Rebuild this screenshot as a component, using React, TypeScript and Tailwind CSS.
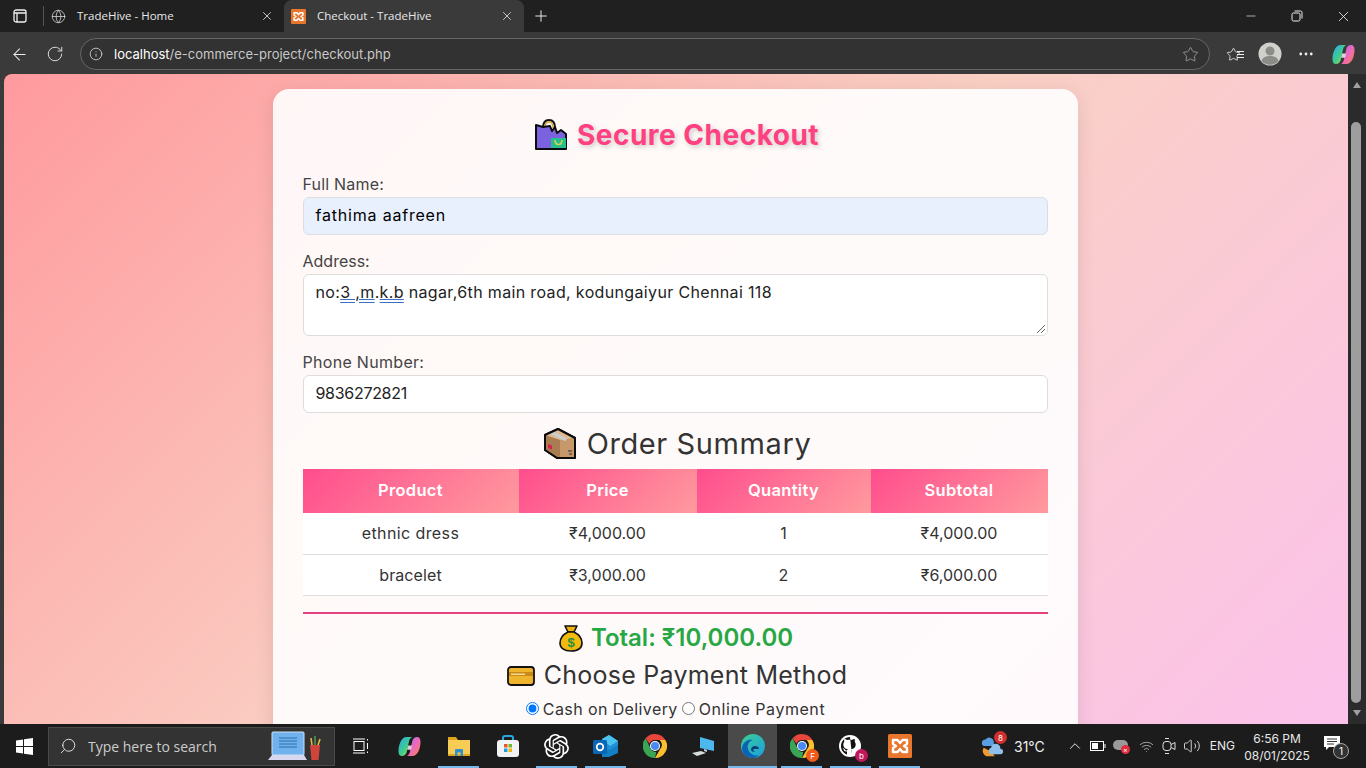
import React from 'react';
import { X, Plus, ArrowLeft, RotateCw, Info, Star, Minus, MoreHorizontal, Globe, ChevronUp, Volume2, Wifi, Search } from 'lucide-react';
import { SiOpenai } from 'react-icons/si';

const font = "font-['Inter','Open_Sans',sans-serif]";

// Small colored icons
const Xampp = ({ size = 18 }: { size?: number }) => (
  <svg width={size} height={size} viewBox="0 0 24 24">
    <rect width="24" height="24" rx="1.5" fill="#e8762d" />
    <path d="M5 6h4.5l2.5 3 2.5-3H19v4l-3 2 3 2v4h-4.5L12 15l-2.5 3H5v-4l3-2-3-2z" fill="none" stroke="#fff" strokeWidth="2.4" strokeLinejoin="round" />
  </svg>
);

const Copilot = ({ size = 24, id }: { size?: number; id: string }) => (
  <svg width={size} height={size} viewBox="0 0 24 24">
    <defs>
      <linearGradient id={`${id}A`} x1="0" y1="0" x2="1" y2="1">
        <stop offset="0" stopColor="#2aa8ee" />
        <stop offset="0.55" stopColor="#3fcf8a" />
        <stop offset="1" stopColor="#f7d43a" />
      </linearGradient>
      <linearGradient id={`${id}B`} x1="0" y1="0" x2="1" y2="1">
        <stop offset="0" stopColor="#a86bf0" />
        <stop offset="0.55" stopColor="#f06ab8" />
        <stop offset="1" stopColor="#f7803a" />
      </linearGradient>
    </defs>
    <path d="M9 2h6c-2 .6-3 2.400-3.600 5L9 18c-.6 2.500-2.400 4-5 4-2 0-3.500-1.500-3.500-5C.5 10 3.500 2 9 2z" fill={`url(#${id}A)`} />
    <path d="M15 22H9c2-.6 3-2.400 3.600-5L15 6c.6-2.500 2.400-4 5-4 2 0 3.500 1.500 3.500 5 0 7-3 15-8.500 15z" fill={`url(#${id}B)`} />
    <path d="M10.500 11h4l-1 4.500h-4z" fill="#f6f0f8" opacity="0.85" />
  </svg>
);

const Bag = () => (
  <svg width="34" height="34" viewBox="0 0 34 34">
    <path d="M9 10c0-6 3-8 6-8s6 2 6 8" fill="none" stroke="#111" strokeWidth="2" />
    <path d="M11 10c0-4 2-6 4-6s4 2 4 6" fill="none" stroke="#d6a93a" strokeWidth="1.500" />
    <path d="M2 7l7 2 7-1 2 5 3-4 2 6 4-3 5 4v15H2z" fill="#7a62e0" stroke="#0c0c0c" strokeWidth="2" strokeLinejoin="round" />
    <path d="M17 20h15v11H17z" fill="#25c08e" />
    <path d="M21 22c0 6 7 6 7 0" fill="none" stroke="#d9d24a" strokeWidth="1.500" />
    <path d="M2 31h30" stroke="#0c0c0c" strokeWidth="2" />
  </svg>
);

const Box = () => (
  <svg width="34" height="34" viewBox="0 0 34 34">
    <path d="M2 8l13-6 17 9v20H14L2 23z" fill="#c99a6c" stroke="#0c0c0c" strokeWidth="2" strokeLinejoin="round" />
    <path d="M2 8l13-6 17 9-15 2z" fill="#e0bb92" />
    <path d="M17 13l15-2v20H17z" fill="#c6986a" />
    <path d="M2 8l15 5v18L2 23z" fill="#a97c52" />
    <path d="M8 5l15 8" stroke="#c5cfd6" strokeWidth="3" />
    <path d="M5 17l4 1.500v4l-4-1.500z" fill="#d8234e" />
    <path d="M25 24h4M26 27h3" stroke="#333" strokeWidth="1.200" />
    <path d="M2 8l13-6 17 9v20H14L2 23z" fill="none" stroke="#0c0c0c" strokeWidth="2" strokeLinejoin="round" />
  </svg>
);

const Money = () => (
  <svg width="24" height="28" viewBox="0 0 24 28">
    <path d="M6 2h12l-3 6H9z" fill="#eeb211" stroke="#111" strokeWidth="1.600" strokeLinejoin="round" />
    <path d="M9 8h6c4 2 8 6 8 11 0 5-4 8-11 8S1 24 1 19c0-5 4-9 8-11z" fill="#f2b90f" stroke="#111" strokeWidth="1.600" />
    <text x="12" y="23" fontSize="13" fontWeight="700" textAnchor="middle" fill="#1f8f3a" fontFamily="Liberation Sans">$</text>
  </svg>
);

const Card = () => (
  <svg width="28" height="20" viewBox="0 0 28 20">
    <rect x="1" y="1" width="26" height="18" rx="3" fill="#eeb42b" stroke="#111" strokeWidth="1.800" />
    <rect x="2" y="6" width="24" height="4" fill="#c98a1a" />
    <rect x="4" y="7.500" width="14" height="1.500" fill="#f6d98a" />
  </svg>
);

const Chrome = ({ size = 24 }: { size?: number }) => (
  <svg width={size} height={size} viewBox="0 0 24 24">
    <path d="M12 0a12 12 0 0 1 10.400 6H12a6 6 0 0 0-5.600 3.800L2.600 4.300A12 12 0 0 1 12 0z" fill="#e8453c" />
    <path d="M22.400 6A12 12 0 0 1 12 24l5.200-9a6 6 0 0 0-.7-9z" fill="#fbc02d" />
    <path d="M12 24A12 12 0 0 1 2.600 4.300L7.800 15a6 6 0 0 0 5.500 3z" fill="#3aa655" />
    <circle cx="12" cy="12" r="5" fill="#fff" />
    <circle cx="12" cy="12" r="4" fill="#4a8af4" />
  </svg>
);

const Edge = () => (
  <svg width="24" height="24" viewBox="0 0 24 24">
    <defs>
      <linearGradient id="edgeA" x1="0" y1="0" x2="1" y2="1">
        <stop offset="0" stopColor="#3ccf91" />
        <stop offset="1" stopColor="#1b9de2" />
      </linearGradient>
    </defs>
    <circle cx="12" cy="12" r="12" fill="url(#edgeA)" />
    <path d="M1 14C2 7 8 5 12 6c-4 1-6 5-5 9s6 8 11 6c-2 2-4 3-6 3-6 0-11-4-11-10z" fill="#0c62b5" />
    <path d="M10 16c0-3 2-4 4-4s4 1 4 3h-5c-1 0-1 2 1 3-2 0-4-1-4-2z" fill="#0b3f7a" />
  </svg>
);

const Store = () => (
  <svg width="24" height="24" viewBox="0 0 24 24">
    <path d="M7 7V4a2 2 0 0 1 2-2h6a2 2 0 0 1 2 2v3" fill="none" stroke="#29a8e0" strokeWidth="2" />
    <rect x="1" y="6" width="22" height="17" rx="3" fill="#f1f3f5" />
    <rect x="8" y="10" width="3.500" height="3.500" fill="#e8562a" />
    <rect x="12.500" y="10" width="3.500" height="3.500" fill="#72b82e" />
    <rect x="8" y="14.500" width="3.500" height="3.500" fill="#1f9de0" />
    <rect x="12.500" y="14.500" width="3.500" height="3.500" fill="#f5b50e" />
  </svg>
);

const Outlook = () => (
  <svg width="26" height="24" viewBox="0 0 26 24">
    <path d="M9 5l7-4 9 6v10l-9 5H9z" fill="#1e90d8" />
    <path d="M9 5l7-4 9 6-8 5z" fill="#4cc3ee" />
    <path d="M9 12l8 4 8-5v8l-9 4H9z" fill="#127fc4" />
    <rect x="0" y="6" width="14" height="14" rx="1.500" fill="#0b66b5" />
    <circle cx="7" cy="13" r="3.300" fill="none" stroke="#fff" strokeWidth="1.700" />
  </svg>
);

const Folder = () => (
  <svg width="24" height="22" viewBox="0 0 24 22">
    <path d="M1 2h8l2 3h12v5H1z" fill="#e0a51e" />
    <rect x="1" y="5" width="22" height="16" fill="#f7cd55" />
    <rect x="1" y="19" width="22" height="2" fill="#e0a51e" />
    <path d="M8 21v-6a1 1 0 0 1 1-1h6a1 1 0 0 1 1 1v6h-2.500v-3.500h-3V21z" fill="#2f8fd0" />
  </svg>
);

const Desktop = () => (
  <svg width="26" height="22" viewBox="0 0 26 22">
    <path d="M9 2l14 4v10L9 13z" fill="#4db8ee" />
    <path d="M13 14l3 1v2l-3-1z" fill="#bcd4e2" />
    <path d="M1 18l9-2 5 2-9 3z" fill="#d8dde0" />
  </svg>
);

const GitHubMark = () => (
  <svg width="24" height="24" viewBox="0 0 24 24">
    <circle cx="11" cy="12" r="11" fill="#fff" />
    <path d="M11 3c-5 0-9 4-9 9 0 4 2.500 7.300 6 8.500v-3c-2.500.5-3-1-3.200-1.700-.2-.5-.7-1-1-1.200-.3-.2-.1-.5.6-.3.8.2 1.300 1 1.500 1.300.8 1.300 2 1 2.300.7 0-.6.3-1 .6-1.200-2.200-.3-4.500-1-4.500-4.800 0-1 .4-1.900 1-2.600-.1-.3-.4-1.300.1-2.600 0 0 .8-.3 2.700 1 .8-.2 1.600-.3 2.400-.3s1.600.1 2.400.3c1.900-1.300 2.700-1 2.700-1 .5 1.300.2 2.300.1 2.600.6.7 1 1.500 1 2.600 0 3.800-2.300 4.500-4.500 4.800.4.300.7.900.7 1.800v2.900" fill="#111" />
  </svg>
);

const SearchArt = () => (
  <svg width="54" height="30" viewBox="0 0 54 30">
    <rect x="4" y="1" width="32" height="23" rx="1" fill="#6fb2ee" stroke="#cfe2f2" strokeWidth="1" />
    <path d="M11 7h18M11 10h18M11 13h18M11 16h18" stroke="#2e6dad" strokeWidth="1" />
    <path d="M4 24h32l3 5H0z" fill="#d6d8f0" />
    <path d="M42 14h10l-1.500 15h-7z" fill="#d0443c" />
    <path d="M44 14l-1-7M50 14l2-6" stroke="#e5b93c" strokeWidth="1.600" />
    <path d="M47 14V5" stroke="#4c9a50" strokeWidth="1.600" />
  </svg>
);

const Tab = ({ active, icon, title }: { active?: boolean; icon: React.ReactNode; title: string }) => (
  <div className={`relative flex h-[32px] w-[240px] items-center pl-[5px] pr-[10px] ${active ? 'rounded-t-lg bg-[#3a3a3a]' : ''}`}>
    <div className="flex w-[18px] justify-center">{icon}</div>
    <span className="ml-[10px] flex-1 font-['Open_Sans',sans-serif] text-[11.500px] text-[#e8e8e8]">{title}</span>
    <X size={14} strokeWidth={1.500} className="text-[#dddddd]" />
  </div>
);

const TaskIcon = ({ children, active, running }: { children: React.ReactNode; active?: boolean; running?: boolean }) => (
  <div className={`relative flex h-[44px] w-[49px] shrink-0 items-center justify-center ${active ? 'bg-[#4a4a4a]' : ''}`}>
    {children}
    {running && <div className={`absolute bottom-0 h-[2px] bg-[#76b9ed] ${active ? 'inset-x-0' : 'inset-x-[4px]'}`} />}
  </div>
);

const Badge = ({ text, color }: { text: string; color: string }) => (
  <div className={`absolute bottom-[6px] right-[7px] flex h-[13px] w-[13px] items-center justify-center rounded-full text-[8px] text-white ${color}`}>
    {text}
  </div>
);

const rows = [
  { name: 'ethnic dress', price: '₹4,000.00', qty: '1', sub: '₹4,000.00', track: 'tracking-[0.4px]' },
  { name: 'bracelet', price: '₹3,000.00', qty: '2', sub: '₹6,000.00', track: 'tracking-[0.1px]' },
];

const thClass = "bg-[linear-gradient(135deg,#ff4d8d,#ff9a9e)] h-[44px] p-0 pb-px text-center text-[16.500px] font-semibold tracking-[0.3px] text-white";
const tdClass = "h-[41px] border-b border-[#dddddd] bg-white p-0 text-center text-[16px] text-[#333333]";

export default function App() {
  return (
    <div className={`flex h-[768px] w-[1366px] flex-col overflow-hidden bg-[#3a3a3a] ${font}`}>
      {/* Tab strip */}
      <div className="flex h-[32px] shrink-0 items-center bg-[#202020]">
        <div className="flex w-[43px] items-center justify-center pr-[3px]">
          <svg width="14" height="14" viewBox="0 0 14 14" fill="none" stroke="#eeeeee" strokeWidth="1.300">
            <rect x="1" y="1" width="12" height="12" rx="2" />
            <path d="M1 4h12M4 4v9" />
          </svg>
        </div>
        <div className="h-[20px] w-px bg-[#555555]" />
        <Tab icon={<Globe size={15} strokeWidth={1.200} className="text-[#dddddd]" />} title="TradeHive - Home" />
        <Tab active icon={<Xampp size={15} />} title="Checkout - TradeHive" />
        <Plus size={18} strokeWidth={1.300} className="ml-[8px] text-[#eeeeee]" />
        <div className="ml-auto flex items-center text-[#eeeeee]">
          <Minus size={14} strokeWidth={1.200} className="mr-[33px]" />
          <svg width="12" height="12" viewBox="0 0 12 12" fill="none" stroke="currentColor" strokeWidth="1" className="mr-[32px]">
            <rect x="1" y="3" width="8" height="8" rx="1.500" />
            <path d="M3.500 1H9.500a1.500 1.500 0 0 1 1.500 1.500V8.500" />
          </svg>
          <X size={17} strokeWidth={1.200} className="mr-[14px]" />
        </div>
      </div>

      {/* Address bar */}
      <div className="flex h-[42px] shrink-0 items-center bg-[#3a3a3a] pt-[2px]">
        <ArrowLeft size={19} strokeWidth={1.300} className="ml-[10px] text-[#eeeeee]" />
        <RotateCw size={18} strokeWidth={1.300} className="ml-[17px] text-[#dddddd]" />
        <div className="ml-[16px] flex h-[32px] w-[1130px] items-center rounded-full border border-[#666666] bg-[#323232]">
          <Info size={14} strokeWidth={1.500} className="ml-[8px] text-[#cccccc]" />
          <span className="ml-[11px] pt-px text-[13px]">
            <span className="text-white">localhost</span>
            <span className="text-[#c8c8c8]">/e-commerce-project/checkout.php</span>
          </span>
          <Star size={17} strokeWidth={1.100} className="ml-auto mr-[10px] text-[#aaaaaa]" />
        </div>
        <div className="relative ml-[16px] flex w-[16px] items-center text-[#eeeeee]">
          <Star size={15} strokeWidth={1.300} />
          <div className="absolute left-[11px] flex flex-col gap-[2px]">
            <div className="h-px w-[7px] bg-[#eeeeee]" />
            <div className="h-px w-[7px] bg-[#eeeeee]" />
            <div className="h-px w-[7px] bg-[#eeeeee]" />
          </div>
        </div>
        <svg width="24" height="24" viewBox="0 0 24 24" className="ml-[16px]">
          <circle cx="12" cy="12" r="11.500" fill="#cfcfcb" />
          <circle cx="12" cy="9" r="4.500" fill="#8b8b88" />
          <path d="M3.500 19c1-4 5-5 8.500-5s7.500 1 8.500 5a11.500 11.500 0 0 1-17 0z" fill="#8b8b88" />
        </svg>
        <MoreHorizontal size={18} strokeWidth={1.700} className="ml-[15px] text-[#eeeeee]" />
        <div className="ml-[17px]"><Copilot size={23} id="cpTop" /></div>
      </div>

      {/* Page viewport */}
      <div className="flex h-[650px] shrink-0 overflow-hidden pl-[4px]">
        <div className="flex h-full w-[1344px] justify-center overflow-hidden rounded-tl-lg bg-[linear-gradient(135deg,#ff9a9e_0%,#fad0c4_50%,#fbc2eb_100%)] pr-[2px]">
          <div className="mt-[15px] h-[800px] w-[805px] shrink-0 rounded-2xl bg-white/90 px-[30px] pt-[24px] shadow-[0_4px_20px_rgba(0,0,0,0.1)]">
            <h1 className="flex h-[44px] items-center justify-center gap-[9px] pl-[3px] text-[28px] font-bold tracking-[0.5px] text-[#ff4081] [text-shadow:2px_2px_5px_rgba(0,0,0,0.2)]">
              <Bag />
              Secure Checkout
            </h1>

            <label className="mt-[16px] block h-[24px] text-[16px] leading-[22px] tracking-[0.2px] text-[#444444]">Full Name:</label>
            <div className="flex h-[38px] items-center rounded-md border border-[#dddddd] bg-[#e8f0fe] px-[12px] pb-[2px] text-[16px] tracking-[0.8px] text-black">
              fathima aafreen
            </div>

            <label className="mt-[15px] block h-[24px] text-[16px] leading-[22px] text-[#444444]">Address:</label>
            <div className="relative h-[62px] rounded-md border border-[#dddddd] bg-white px-[12px] pt-[5px] text-[16px] tracking-[0.35px] text-[#222222]">
              no:<span className="underline decoration-[#3b6fc4] decoration-double">3 ,m</span>.<span className="underline decoration-[#3b6fc4] decoration-double">k.b</span> nagar,6th main road, kodungaiyur Chennai 118
              <svg width="10" height="10" viewBox="0 0 10 10" className="absolute bottom-[1px] right-[1px]" stroke="#666666">
                <path d="M1 9l8-8M5 9l4-4" />
              </svg>
            </div>

            <label className="mt-[15px] block h-[24px] text-[16px] leading-[22px] tracking-[0.3px] text-[#444444]">Phone Number:</label>
            <div className="flex h-[38px] items-center rounded-md border border-[#dddddd] bg-white px-[12px] pb-[2px] text-[16px] tracking-[-0.3px] text-[#222222]">
              9836272821
            </div>

            <h2 className="mt-[12px] flex h-[38px] items-center justify-center gap-[10px] pl-[4px] text-[29px] tracking-[0.6px] text-[#333333]">
              <Box />
              Order Summary
            </h2>

            <table className="mt-[6px] w-[745px] table-fixed border-collapse">
              <colgroup>
                <col className="w-[216px]" />
                <col className="w-[178px]" />
                <col className="w-[174px]" />
                <col className="w-[177px]" />
              </colgroup>
              <thead>
                <tr>
                  <th className={thClass}>Product</th>
                  <th className={thClass}>Price</th>
                  <th className={thClass}>Quantity</th>
                  <th className={thClass}>Subtotal</th>
                </tr>
              </thead>
              <tbody>
                {rows.map((row) => (
                  <tr key={row.name}>
                    <td className={`${tdClass} ${row.track}`}>{row.name}</td>
                    <td className={tdClass}>{row.price}</td>
                    <td className={tdClass}>{row.qty}</td>
                    <td className={tdClass}>{row.sub}</td>
                  </tr>
                ))}
              </tbody>
            </table>

            <div className="mt-[16px] h-[2px] bg-[#e5417f]" />

            <div className="mt-[9px] flex h-[30px] items-center justify-center gap-[8px] pl-[2px] text-[24px] font-semibold text-[#28a745]">
              <Money />
              Total: ₹10,000.00
            </div>

            <h2 className="mt-[7px] flex h-[32px] items-center justify-center gap-[9px] pl-[4px] text-[25px] tracking-[0.25px] text-[#333333]">
              <Card />
              Choose Payment Method
            </h2>

            <div className="mt-[7px] flex h-[20px] items-center justify-center pl-[1px] text-[16px] text-[#333333]">
              <input type="radio" name="pay" defaultChecked className="mr-[4px] h-[13px] w-[13px] accent-[#0075ff]" />
              <span className="tracking-[0.4px]">Cash on Delivery</span>
              <input type="radio" name="pay" className="ml-[4px] mr-[4px] h-[13px] w-[13px]" />
              <span className="tracking-[0.55px]">Online Payment</span>
            </div>
          </div>
        </div>

        {/* Scrollbar */}
        <div className="relative w-[18px] shrink-0 bg-[#2b2b2b]">
          <div className="absolute left-[5px] top-[8px] h-0 w-0 border-x-[4px] border-b-[6px] border-x-transparent border-b-[#a0a0a0]" />
          <div className="absolute left-[3px] top-[48px] h-[581px] w-[10px] rounded-full bg-[#9e9e9e]" />
          <div className="absolute bottom-[8px] left-[5px] h-0 w-0 border-x-[4px] border-t-[6px] border-x-transparent border-t-[#a0a0a0]" />
        </div>
      </div>

      {/* Taskbar */}
      <div className="flex h-[44px] shrink-0 items-center bg-[#1c1c1c] text-white">
        <div className="flex w-[48px] justify-center">
          <svg width="17" height="17" viewBox="0 0 17 17" fill="#ffffff">
            <path d="M0 2.400 7 1.400V8H0zM8 1.300 17 0v8H8zM0 9h7v6.600L0 14.600zM8 9h9v8l-9-1.300z" />
          </svg>
        </div>
        <div className="flex h-[39px] w-[287px] items-center border border-[#4a4a4a] bg-[#333333] pl-[10px]">
          <Search size={18} strokeWidth={1.300} className="-scale-x-100 text-[#dddddd]" />
          <span className="ml-[11px] flex-1 font-['Open_Sans',sans-serif] text-[14px] text-[#cccccc]">Type here to search</span>
          <div className="mr-[12px]"><SearchArt /></div>
        </div>
        <div className="ml-px flex items-center">
          <TaskIcon>
            <svg width="16" height="16" viewBox="0 0 16 16" fill="none" stroke="#ffffff" strokeWidth="1">
              <rect x="1" y="3.500" width="10" height="9" />
              <path d="M0 1h12M0 15h12M14.500 1v1.500M14.500 5v6M14.500 13.500V15" />
            </svg>
          </TaskIcon>
          <TaskIcon><Copilot size={23} id="cpBar" /></TaskIcon>
          <TaskIcon running><Folder /></TaskIcon>
          <TaskIcon><Store /></TaskIcon>
          <TaskIcon running><SiOpenai size={25} color="#ffffff" /></TaskIcon>
          <TaskIcon running><Outlook /></TaskIcon>
          <TaskIcon><Chrome /></TaskIcon>
          <TaskIcon><Desktop /></TaskIcon>
          <TaskIcon active running><Edge /></TaskIcon>
          <TaskIcon running><Chrome /><Badge text="F" color="bg-[#f05a1c]" /></TaskIcon>
          <TaskIcon running><GitHubMark /><Badge text="b" color="bg-[#c2185b]" /></TaskIcon>
          <TaskIcon running><Xampp size={24} /></TaskIcon>
        </div>

        {/* System tray */}
        <div className="relative ml-[56px] flex w-[24px] justify-center">
          <svg width="26" height="26" viewBox="0 0 26 26">
            <path d="M2 10a4 4 0 0 1 4-4 5 5 0 0 1 9 2v5H4a3 3 0 0 1-2-3z" fill="#5a9de0" />
            <path d="M4 15l8 4 4 5H7a6 6 0 0 1-3-9z" fill="#f29a2e" />
            <path d="M11 22a4 4 0 0 1 1-7 5 5 0 0 1 10 1 3 3 0 0 1 0 6z" fill="#8fc0ec" />
          </svg>
          <div className="absolute right-[-3px] top-[-2px] flex h-[13px] w-[13px] items-center justify-center rounded-full bg-[#d03030] text-[8px]">8</div>
        </div>
        <span className="ml-[10px] text-[14px] text-[#eeeeee]">31°C</span>
        <ChevronUp size={18} strokeWidth={1.300} className="ml-[21px] text-[#eeeeee]" />
        <svg width="16" height="10" viewBox="0 0 16 10" className="ml-[6px]" fill="none" stroke="#ffffff">
          <rect x="0.500" y="0.500" width="13" height="9" />
          <rect x="2" y="2" width="6" height="6" fill="#ffffff" stroke="none" />
          <path d="M15 3v4" />
        </svg>
        <div className="relative ml-[7px] h-[14px] w-[16px]">
          <div className="absolute left-0 top-[1px] h-[10px] w-[15px] rounded-full bg-[#999999]" />
          <div className="absolute -bottom-[1px] -right-[1px] flex h-[9px] w-[9px] items-center justify-center rounded-full bg-[#e03040] text-[7px] leading-none">×</div>
        </div>
        <Wifi size={15} strokeWidth={1.200} className="ml-[10px] text-[#cccccc]" />
        <svg width="16" height="20" viewBox="0 0 16 20" fill="none" stroke="#e0e0e0" className="ml-[7px]">
          <rect x="2" y="5.500" width="8" height="9" rx="3" />
          <path d="M10 8.500l4-2v7l-4-2M4 2.500h4M4 17.500h4" />
        </svg>
        <Volume2 size={18} strokeWidth={1.200} className="ml-[6px] text-[#e0e0e0]" />
        <span className="ml-[9px] text-[12px] text-[#e8e8e8]">ENG</span>
        <div className="ml-[13px] flex w-[58px] flex-col items-center pt-[2px] text-[12px] leading-[17px] text-[#e8e8e8]">
          <span>6:56 PM</span>
          <span>08/01/2025</span>
        </div>
        <div className="relative ml-[18px] h-[24px] w-[22px]">
          <svg width="16" height="15" viewBox="0 0 16 15" className="absolute left-0 top-[2px]">
            <path d="M0 0h16v11H5l-3 3v-3H0z" fill="#ffffff" />
            <path d="M3 3h10M3 5.500h10M3 8h7" stroke="#333333" />
          </svg>
          <div className="absolute bottom-[-1px] right-[-3px] flex h-[16px] w-[16px] items-center justify-center rounded-full border border-[#aaaaaa] bg-[#333333] text-[10px]">1</div>
        </div>
      </div>
    </div>
  );
}
